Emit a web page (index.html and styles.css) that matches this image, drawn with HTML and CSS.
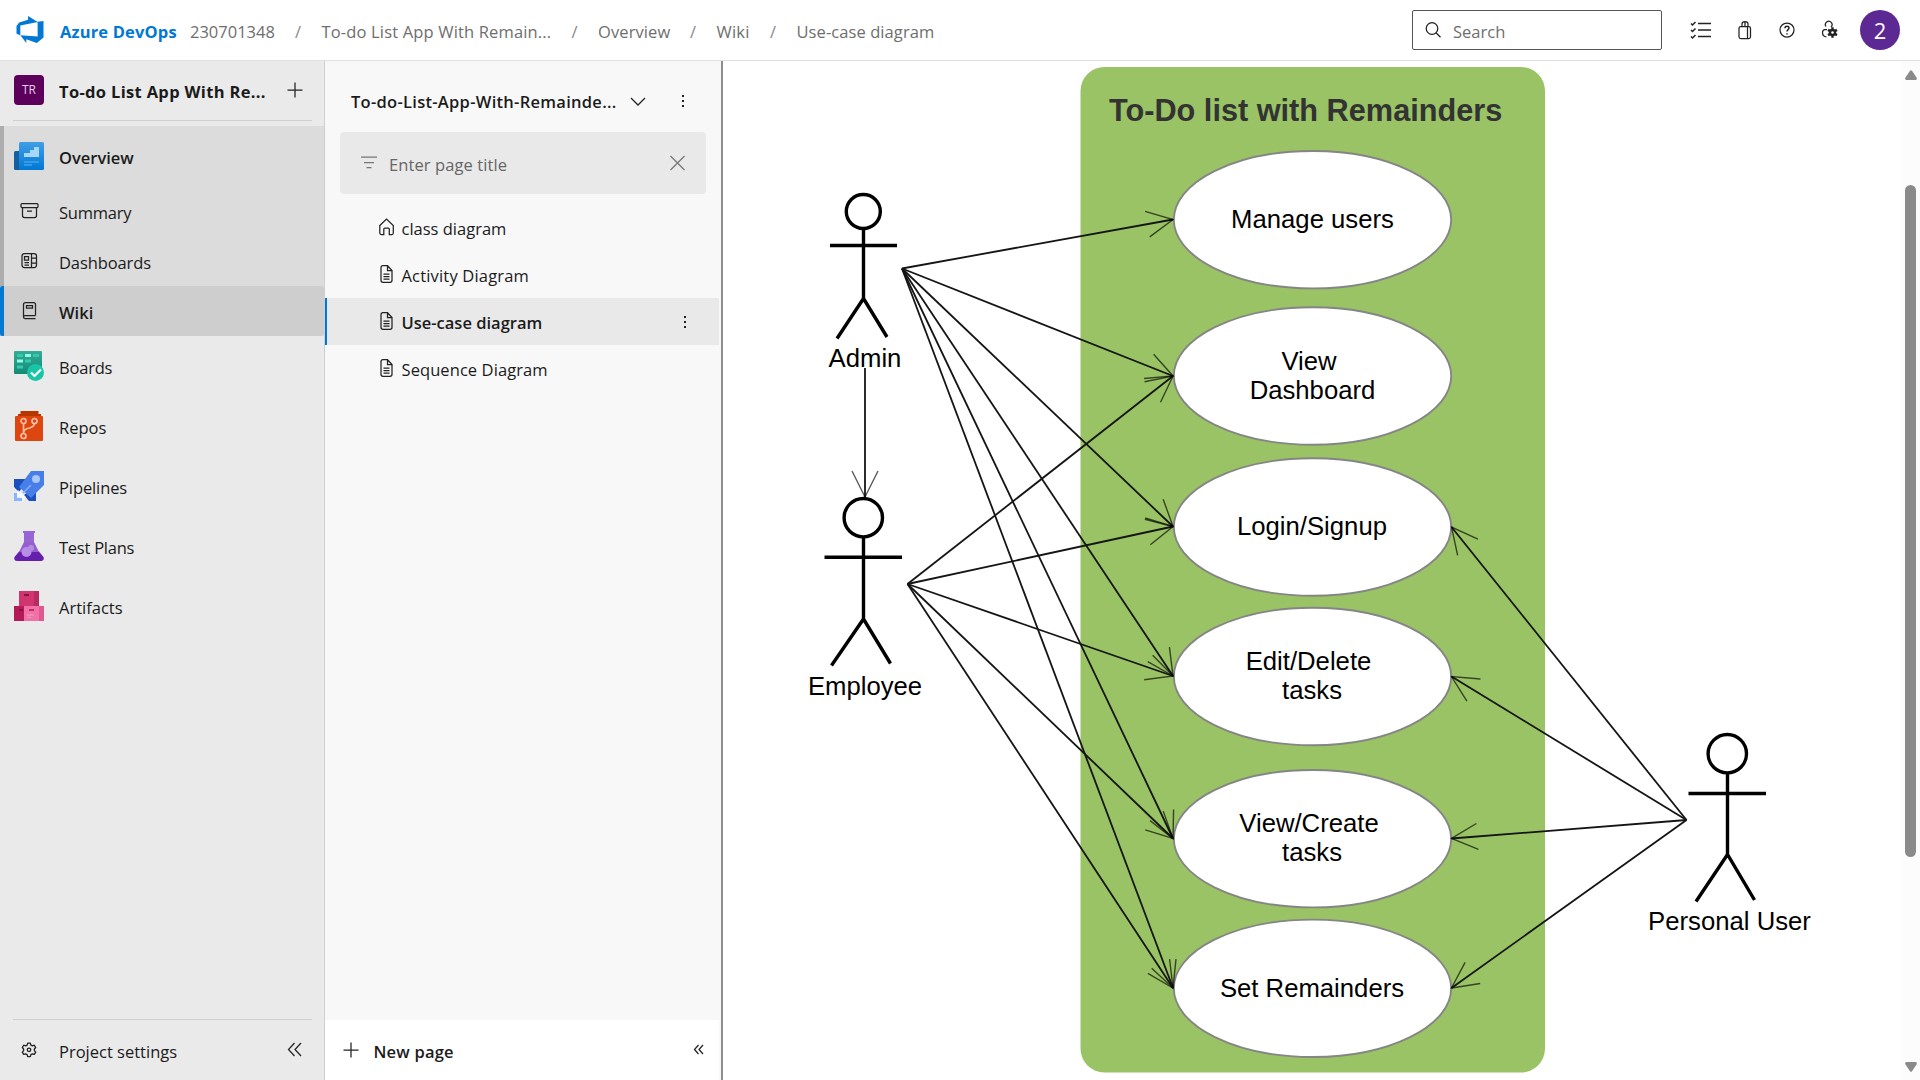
FILE: index.html
```html
<!DOCTYPE html>
<html lang="en">
<head>
<meta charset="utf-8">
<title>Use-case diagram - Wiki</title>
<link rel="stylesheet" href="styles.css">
</head>
<body>
<header class="topbar">
  <svg class="logo" width="28" height="27" viewBox="1 1 16 16"><path d="M17 4v9.740l-4 3.280-6.200-2.260V17l-3.510-4.590 10.230.8V4.440L17 4Zm-3.410.490L7.850 1v2.290L2.580 4.840 1 6.870v4.610l2.260 1V6.570l10.330-2.080Z" fill="#0078d4"/></svg>
  <span class="brand">Azure DevOps</span>
  <nav class="crumbs">
    <span class="c-org">230701348</span><i>/</i>
    <span class="c-project">To-do List App With Remain...</span><i>/</i>
    <span class="c-hub">Overview</span><i>/</i>
    <span class="c-wiki">Wiki</span><i>/</i>
    <span class="c-page">Use-case diagram</span>
  </nav>
  <div class="search">
    <svg width="18" height="18" viewBox="0 0 18 18" class="line"><circle cx="8" cy="7.500" r="5.800"/><path d="m12 11.800 4.500 4.500"/></svg>
    <span>Search</span>
  </div>
  <div class="tools">
    <svg width="22" height="20" viewBox="0 0 22 20" class="line"><path d="M8 3.500h13M8 10h13M8 16.500h13" stroke-width="1.500"/><path d="m1 3.500 1.500 1.500L5.500 2M1 10l1.500 1.500L5.500 8.500M1 16.500 2.500 18l3-3" stroke-width="1.500"/></svg>
    <svg width="16" height="20" viewBox="0 0 16 20" class="line"><rect x="2" y="6.500" width="11.500" height="12" rx="1.800"/><path d="M5 6.500V3.800Q5 1.500 8 1.500t3 2.300v2.700M8 1.500v5M10.500 6.500v12"/></svg>
    <svg width="18" height="18" viewBox="0 0 18 18" class="line"><circle cx="9" cy="9" r="7"/><path d="M7 7.200Q7 5.200 9 5.200t2 1.900C11 8.600 9 8.600 9 10.500M9 12.200v1.300" stroke-width="1.500"/></svg>
    <svg width="18" height="19" viewBox="0 0 18 19" class="line"><path d="M5 6.500a3.300 3.300 0 1 1 5 .5M6 9.500H4Q1.500 9.500 1.500 12.500q0 4 4 4.500"/><path d="M11.500 7.300v10.400M7 9.900l9 5.200M16 9.900l-9 5.200" stroke-width="2.400"/><circle cx="11.500" cy="12.500" r="2.600" stroke-width="2.200"/><circle cx="11.500" cy="12.500" r="1.300" fill="#fff" stroke="none"/></svg>
  </div>
  <div class="avatar">2</div>
</header>

<div class="body">
  <aside class="sidebar">
    <div class="project">
      <span class="badge">TR</span>
      <span class="project-name">To-do List App With Re...</span>
      <svg width="16" height="16" viewBox="0 0 16 16" class="line"><path d="M8 .5v15M.5 8h15"/></svg>
    </div>
    <div class="group">
      <div class="nav hub">
        <svg width="30" height="30" viewBox="0 0 30 30"><defs><linearGradient id="ov" x2="0" y2="1"><stop stop-color="#419ee4"/><stop offset="1" stop-color="#0078d4"/></linearGradient></defs><rect y="10" width="9" height="19" rx="1.500" fill="#175e9e"/><rect x="5" y="1" width="25" height="28" rx="1.500" fill="url(#ov)"/><path d="M10 16v-4h6V9h4V6h5v10Z" fill="#a5d7ff"/><path d="M10 21h15M10 24h8" stroke="#5bb4f5" stroke-width="1.200"/></svg>
        <span class="t-overview">Overview</span>
      </div>
      <div class="nav sub">
        <svg width="30" height="20" viewBox="0 0 30 20" class="line"><rect x="7" y="2.500" width="17" height="4" rx="1"/><path d="M8.500 6.500v8q0 2 2 2h10q2 0 2-2v-8M13 10h5"/></svg>
        <span class="t-summary">Summary</span>
      </div>
      <div class="nav sub">
        <svg width="30" height="20" viewBox="0 0 30 20" class="line"><rect x="8" y="2.500" width="14.500" height="14" rx="2.500"/><path d="M17.500 2.500v14M17.500 7h5M17.500 12h5M10.500 5.500h4v3.500h-4ZM10.500 11.500h4.500M10.500 14h4.500"/></svg>
        <span class="t-dash">Dashboards</span>
      </div>
      <div class="nav sub current">
        <svg width="30" height="20" viewBox="0 0 30 20" class="line"><path d="M21.500 14.500H11q-1.500 0-1.500 1.500t1.500 1.500H21.500M9.500 16V3.500Q9.500 1.500 11.500 1.500h8Q21.500 1.500 21.500 3.500v11M12.500 4.500h6v2.500h-6Z"/></svg>
        <span class="t-wiki">Wiki</span>
      </div>
    </div>
    <div class="nav hub">
      <svg width="30" height="30" viewBox="0 0 30 30"><defs><linearGradient id="bo" x2="0" y2="1"><stop stop-color="#35ab97"/><stop offset="1" stop-color="#128b76"/></linearGradient></defs><rect width="28" height="23" rx="1" fill="url(#bo)"/><path d="M3 3h6v3H3zM19 3h6v3h-6zM11 8.500h6v3h-6zM3 14.500h6v3H3z" fill="#32cbae"/><path d="M11 3h6v3h-6zM3 8.500h6v3H3z" fill="#91fbe5"/><circle cx="21.500" cy="21.500" r="8.500" fill="#18c5a7"/><path d="m17 21.500 3.500 3.500 6.500-6.500" fill="none" stroke="#fff" stroke-width="2.200"/></svg>
      <span class="t-boards">Boards</span>
    </div>
    <div class="nav hub">
      <svg width="30" height="30" viewBox="0 0 30 30"><path d="M4 5V3h2.500V0h18v3H27v2Z" fill="#b83600"/><rect x="1" y="5" width="28" height="25" rx="1" fill="#dd460e"/><g fill="none" stroke="#ffbda3" stroke-width="1.700"><path d="M9.500 13v9q0-4 6-5 5-1.500 5-5"/><circle cx="9.500" cy="10" r="2.500"/><circle cx="20.500" cy="10" r="2.500"/><circle cx="9.500" cy="25" r="2.500"/></g></svg>
      <span class="t-repos">Repos</span>
    </div>
    <div class="nav hub">
      <svg width="30" height="30" viewBox="0 0 30 30"><path d="M0 8h14L5 21l-5-5ZM22 15v15H15l-5-6Z" fill="#1b50bd"/><path d="M17 0h13v14L17 27 5 16Z" fill="#477ee8"/><circle cx="22" cy="8" r="4" fill="#a8c6ff"/><path d="m17 14-8 8" stroke="#7fabff" stroke-width="1.700"/><path d="m4 19 8 7-2 4-4-4-4-1Z" fill="#fff" opacity=".8"/><path d="M0 22h3v5h5v3H0Z" fill="#8ab4ff"/></svg>
      <span class="t-pipe">Pipelines</span>
    </div>
    <div class="nav hub">
      <svg width="30" height="30" viewBox="0 0 30 30"><path d="M9 0h12v2h-1v9H10V2H9Z" fill="#9866d2"/><path d="M5.500 20h19l5 6q1 4-2.500 4H3q-3.500 0-2.500-4Z" fill="#651fac"/><path d="m10 11-5 10h20L20 11Z" fill="#9360cf"/><circle cx="12.500" cy="21" r="5" fill="#b98ce8"/><circle cx="17" cy="17" r="3" fill="#b68be3"/></svg>
      <span class="t-test">Test Plans</span>
    </div>
    <div class="nav hub">
      <svg width="30" height="30" viewBox="0 0 30 30"><rect x="5" width="20" height="15" fill="#d13570"/><path d="M20 0h5v15h-5Z" fill="#b92a61"/><path d="M0 15h10v15H0Z" fill="#b31a57"/><path d="M10 15h20v15H10Z" fill="#f071a5"/><path d="M25 15h5v15h-5Z" fill="#e05891"/><path d="M10 3h5v2h-5zM5 18h4v2H5z" fill="#8c1242"/><path d="M15 18h5v2h-5z" fill="#c22e68"/><path d="M13 24h7M13 26.500h4" stroke="#fa9cc2"/></svg>
      <span class="t-art">Artifacts</span>
    </div>
    <div class="settings">
      <svg width="30" height="18" viewBox="-2 0 34 20" class="line"><path d="m13.500 2.200h3l.6 2.200 1.700.9 2.200-.7 1.600 2.600-1.500 1.700v1.800l1.500 1.700-1.600 2.600-2.200-.7-1.700.9-.6 2.300h-3l-.6-2.300-1.700-.9-2.200.7-1.600-2.600 1.500-1.700V8.900L7.400 7.200 9 4.600l2.200.7 1.700-.9Z" stroke-width="1.500" stroke-linejoin="round"/><circle cx="15" cy="9.800" r="2" stroke-width="1.500"/></svg>
      <span class="t-settings">Project settings</span>
      <svg width="16" height="16" viewBox="0 0 16 16" class="line"><path d="M7.500 1 1.500 7.500l6 6.500M14 1 8 7.500l6 6.500"/></svg>
    </div>
  </aside>

  <section class="pages">
    <div class="wiki-head">
      <span class="t-repo">To-do-List-App-With-Remainde...</span>
      <svg width="16" height="16" viewBox="0 0 16 16" class="line"><path d="m1 4 7 7 7-7"/></svg>
      <svg width="4" height="16" viewBox="0 0 4 16" class="dots"><path d="M1 1h2v2H1zM1 6h2v2H1zM1 11h2v2H1z"/></svg>
    </div>
    <div class="filter">
      <svg width="16" height="14" viewBox="0 0 16 14" class="line"><path d="M0 1h16M3 6.500h10M5.500 11.500h5"/></svg>
      <span class="t-filter">Enter page title</span>
      <svg width="16" height="16" viewBox="0 0 16 16" class="line"><path d="m1.500 1 14 14M15.500 1 1.500 15"/></svg>
    </div>
    <div class="tree">
      <div class="page"><svg width="16" height="18" viewBox="0 0 16 18" class="line"><path d="M.8 7.500 7.500 1l6.800 6.500V15q0 1.500-1.500 1.500h-2.500V11q0-1-1-1H5.800q-1 0-1 1v5.500H2.300q-1.500 0-1.500-1.500Z"/></svg><span class="p-class">class diagram</span></div>
      <div class="page"><svg width="16" height="18" viewBox="0 0 16 18" class="line"><path d="M8.500 .7H4q-2 0-2 2v12.600q0 2 2 2h7q2 0 2-2V5.500ZM8.500 .7v4.800h4.500M4.500 9h6M4.500 11.500h6M4.500 14h6"/></svg><span class="p-act">Activity Diagram</span></div>
      <div class="page selected"><svg width="16" height="18" viewBox="0 0 16 18" class="line"><path d="M8.500 .7H4q-2 0-2 2v12.600q0 2 2 2h7q2 0 2-2V5.500ZM8.500 .7v4.800h4.500M4.500 9h6M4.500 11.500h6M4.500 14h6"/></svg><span class="p-use">Use-case diagram</span><svg width="4" height="16" viewBox="0 0 4 16" class="dots"><path d="M1 2h2v2H1zM1 7h2v2H1zM1 12h2v2H1z"/></svg></div>
      <div class="page"><svg width="16" height="18" viewBox="0 0 16 18" class="line"><path d="M8.500 .7H4q-2 0-2 2v12.600q0 2 2 2h7q2 0 2-2V5.500ZM8.500 .7v4.800h4.500M4.500 9h6M4.500 11.500h6M4.500 14h6"/></svg><span class="p-seq">Sequence Diagram</span></div>
    </div>
    <div class="new-page">
      <svg width="16" height="16" viewBox="0 0 16 16" class="line"><path d="M8 .5v15M.5 8h15"/></svg>
      <span class="t-new">New page</span>
      <svg width="12" height="12" viewBox="0 0 12 12" class="line"><path d="M5.500 1 1.500 5.500l4 4.500M10 1 6 5.500l4 4.500"/></svg>
    </div>
  </section>

  <main class="content">
    <svg class="diagram" width="1178" height="1019" viewBox="723 61 1178 1019">
      <defs>
        <marker id="open" markerUnits="userSpaceOnUse" markerWidth="40" markerHeight="40" viewBox="-32 -20 40 40" refX="0" refY="0" orient="auto">
          <path d="M-26-13 0 0-26 13" class="head"/>
        </marker>
      </defs>
      <rect x="1080.500" y="67" width="464.500" height="1005.500" rx="24" class="system"/>
      <text x="1109" y="121.300" class="title">To-Do list with Remainders</text>
      <g class="case">
        <ellipse cx="1312.500" cy="219.700" rx="138.700" ry="68.700"/>
        <ellipse cx="1312.500" cy="376" rx="138.700" ry="68.700"/>
        <ellipse cx="1312.500" cy="527" rx="138.700" ry="68.700"/>
        <ellipse cx="1312.500" cy="676.500" rx="138.700" ry="68.700"/>
        <ellipse cx="1312.500" cy="838.700" rx="138.700" ry="68.700"/>
        <ellipse cx="1312.500" cy="988.300" rx="138.700" ry="68.700"/>
      </g>
      <g class="labels">
        <text x="1312.500" y="227.500">Manage users</text>
        <text x="1309" y="370">View</text><text x="1312.500" y="399.300">Dashboard</text>
        <text x="1312" y="535.200">Login/Signup</text>
        <text x="1308.500" y="669.700">Edit/Delete</text><text x="1312" y="699.300">tasks</text>
        <text x="1309" y="831.700">View/Create</text><text x="1312" y="861.300">tasks</text>
        <text x="1312" y="997">Set Remainders</text>
        <text x="865" y="367.300">Admin</text>
        <text x="865" y="694.500">Employee</text>
        <text x="1729.500" y="930.300">Personal User</text>
      </g>
      <g class="flow">
        <path d="M902 268.500 1173 219.500"/><path d="M902 268.500 1173 376"/><path d="M902 268.500 1173 526.500"/><path d="M902 268.500 1173 676"/><path d="M902 268.500 1173 838.500"/><path d="M902 268.500 1173 988"/>
        <path d="M907.500 584 1173 376"/><path d="M907.500 584 1173 526.500"/><path d="M907.500 584 1173 676"/><path d="M907.500 584 1173 838.500"/><path d="M907.500 584 1173 988"/>
        <path d="M1686.500 820 1451.500 527"/><path d="M1686.500 820 1451.500 676.500"/><path d="M1686.500 820 1451.500 838.500"/><path d="M1686.500 820 1451.500 988"/>
        <path d="M865 368V497"/>
      </g>
      <g class="actor">
        <circle cx="863.300" cy="211.500" r="17"/><path d="M863.500 229V298.500M830 245.500h67M837 338.500l26.500-40 23.500 38.500"/>
        <circle cx="863.300" cy="517.700" r="19.200"/><path d="M863.500 537.500V619M824.500 557.200h77.500M831.500 665.500l32-46.500 27 44.500"/>
        <circle cx="1727.300" cy="753.700" r="19.200"/><path d="M1727.500 773V854.500M1688.500 793.500h77.500M1696 901.500l31.500-47 27 45.500"/>
      </g>
    </svg>
    <div class="scroll">
      <svg width="12" height="10" viewBox="0 0 12 10"><path d="M1 10Q-.5 9 .5 7.500L5 .800q1-1.200 2 0l4.500 6.700Q12.500 9 11 10Z" fill="#8a8a8a"/></svg>
      <div class="thumb"></div>
      <svg width="12" height="10" viewBox="0 0 12 10"><path d="M1 0Q-.5 1 .5 2.500L5 9.200q1 1.200 2 0l4.500-6.700Q12.500 1 11 0Z" fill="#8a8a8a"/></svg>
    </div>
  </main>
</div>
</body>
</html>
```
FILE: styles.css
```css
* { box-sizing: border-box; }
body {
  margin: 0;
  width: 1920px;
  height: 1080px;
  overflow: hidden;
  display: flex;
  flex-direction: column;
  font: 16.5px/24px "Open Sans", "Noto Sans", sans-serif;
  color: #1b1b1b;
  background: #fff;
}
span, i { white-space: nowrap; }
svg { flex: none; display: block; }
.line { fill: none; stroke: #222; stroke-width: 1.25; }
.dots { fill: #222; }

.topbar {
  height: 61px;
  flex: none;
  display: flex;
  align-items: center;
  padding: 0 20px 1px 16px;
  border-bottom: 1px solid #e0e0e0;
}
.brand { width: 130px; margin: 4px 0 0 16px; color: #0078d4; font-weight: 700; letter-spacing: .15px; }
.crumbs { display: flex; margin-top: 4px; color: #6e6e6e; }
.crumbs i { width: 26.5px; margin-left: 20px; font-style: normal; color: #888; }
.crumbs span { flex: none; }
.c-org { width: 85px; }
.c-project { width: 230px; letter-spacing: .16px; }
.c-hub { width: 72px; letter-spacing: .1px; }
.c-wiki { width: 33.5px; letter-spacing: .2px; }
.c-page { letter-spacing: .08px; }
.search {
  width: 250px;
  height: 40px;
  margin-left: auto;
  display: flex;
  align-items: center;
  gap: 11px;
  padding-left: 11px;
  border: 1px solid #555;
  border-radius: 2px;
  color: #6e6e6e;
}
.search span { margin-top: 4px; }
.tools { display: flex; align-items: center; gap: 25px; margin-left: 28px; }
.avatar {
  width: 40px;
  height: 40px;
  margin-left: 21px;
  border-radius: 50%;
  background: #5c2893;
  color: #fff;
  font-size: 22px;
  line-height: 40px;
  text-align: center;
}

.body { flex: 1; display: flex; min-height: 0; }

.sidebar {
  width: 325px;
  display: flex;
  flex-direction: column;
  background: #eaeaea;
  border-right: 1px solid #cfcfcf;
}
.project {
  height: 60px;
  margin: 0 12px 5px 13px;
  padding: 0 9px 1px 1px;
  display: flex;
  align-items: center;
  border-bottom: 1px solid #cfcfcf;
}
.badge {
  width: 30px;
  height: 30px;
  border-radius: 4px;
  background: #5c005c;
  color: #e3cfe3;
  font-size: 12px;
  line-height: 30px;
  text-align: center;
}
.project-name { flex: 1; margin: 4px 0 0 15px; font-weight: 700; letter-spacing: .33px; }
.group { background: linear-gradient(90deg, #adadad 4px, #dcdcdc 4px); }
.nav { display: flex; align-items: center; gap: 15px; padding-left: 14px; }
.nav span { margin-top: 4px; }
.hub { height: 60px; }
.sub { height: 50px; }
.current {
  background: linear-gradient(90deg, #0078d4 4px, #cecece 4px);
  border-radius: 3px;
}
.t-overview, .t-wiki, .t-repo, .p-use, .t-new { font-weight: 600; }
.t-summary, .t-test { letter-spacing: -.25px; }
.t-dash, .t-pipe { letter-spacing: -.1px; }
.t-boards { letter-spacing: -.2px; }
.settings {
  height: 61px;
  margin: auto 12px 0 13px;
  padding: 0 9px 0 1px;
  display: flex;
  align-items: center;
  gap: 15px;
  border-top: 1px solid #cfcfcf;
}
.settings span { flex: 1; margin-top: 3px; }

.pages {
  width: 398px;
  display: flex;
  flex-direction: column;
  background: #f8f8f8;
  border-right: 2px solid #8d8d8d;
}
.wiki-head { height: 71px; display: flex; align-items: center; padding: 11px 0 0 26px; }
.t-repo { width: 279px; letter-spacing: .28px; }
.wiki-head .dots { margin-left: 35px; }
.filter {
  height: 62px;
  margin: 0 15px 10px;
  padding: 0 21px;
  display: flex;
  align-items: center;
  gap: 12px;
  border-radius: 4px;
  background: #e9e9e9;
  color: #666;
}
.filter .line { stroke: #777; }
.t-filter { flex: 1; margin-top: 3px; letter-spacing: .1px; }
.page { height: 47px; margin-right: 2px; padding-left: 54px; display: flex; align-items: center; gap: 6.5px; }
.page span { flex: 1; margin-top: 2px; }
.page .line { margin-top: -2px; }
.p-act { letter-spacing: .18px; }
.p-seq { letter-spacing: .08px; }
.selected { background: linear-gradient(90deg, #0078d4 2px, #e9e9e9 2px); }
.selected .dots { margin-right: 32px; }
.new-page {
  height: 60px;
  margin: auto 2px 0 0;
  padding: 0 14px 0 18px;
  display: flex;
  align-items: center;
  gap: 14.5px;
  background: #fff;
}
.t-new { flex: 1; margin-top: 3px; letter-spacing: .2px; }

.content { flex: 1; display: flex; min-width: 0; }
.diagram { font-family: "Liberation Sans", Arial, sans-serif; }
.system { fill: #99c364; }
.title { font-size: 30.7px; font-weight: 700; fill: #333; }
.case { fill: #fff; stroke: #858585; stroke-width: 1.9; }
.labels { font-size: 25.7px; fill: #000; text-anchor: middle; }
.flow { fill: none; stroke: #151515; stroke-width: 1.8; }
.flow path { marker-end: url(#open); }
.head { fill: none; stroke: #000; stroke-opacity: .65; stroke-width: 1.4; }
.actor { fill: none; stroke: #000; stroke-width: 3.4; }
.scroll {
  width: 19px;
  display: flex;
  flex-direction: column;
  align-items: center;
  padding: 9px 0 8px;
  background: #fcfcfc;
}
.thumb { width: 11px; height: 672px; margin: 105px 0 auto; border-radius: 6px; background: #8a8a8a; }
```
